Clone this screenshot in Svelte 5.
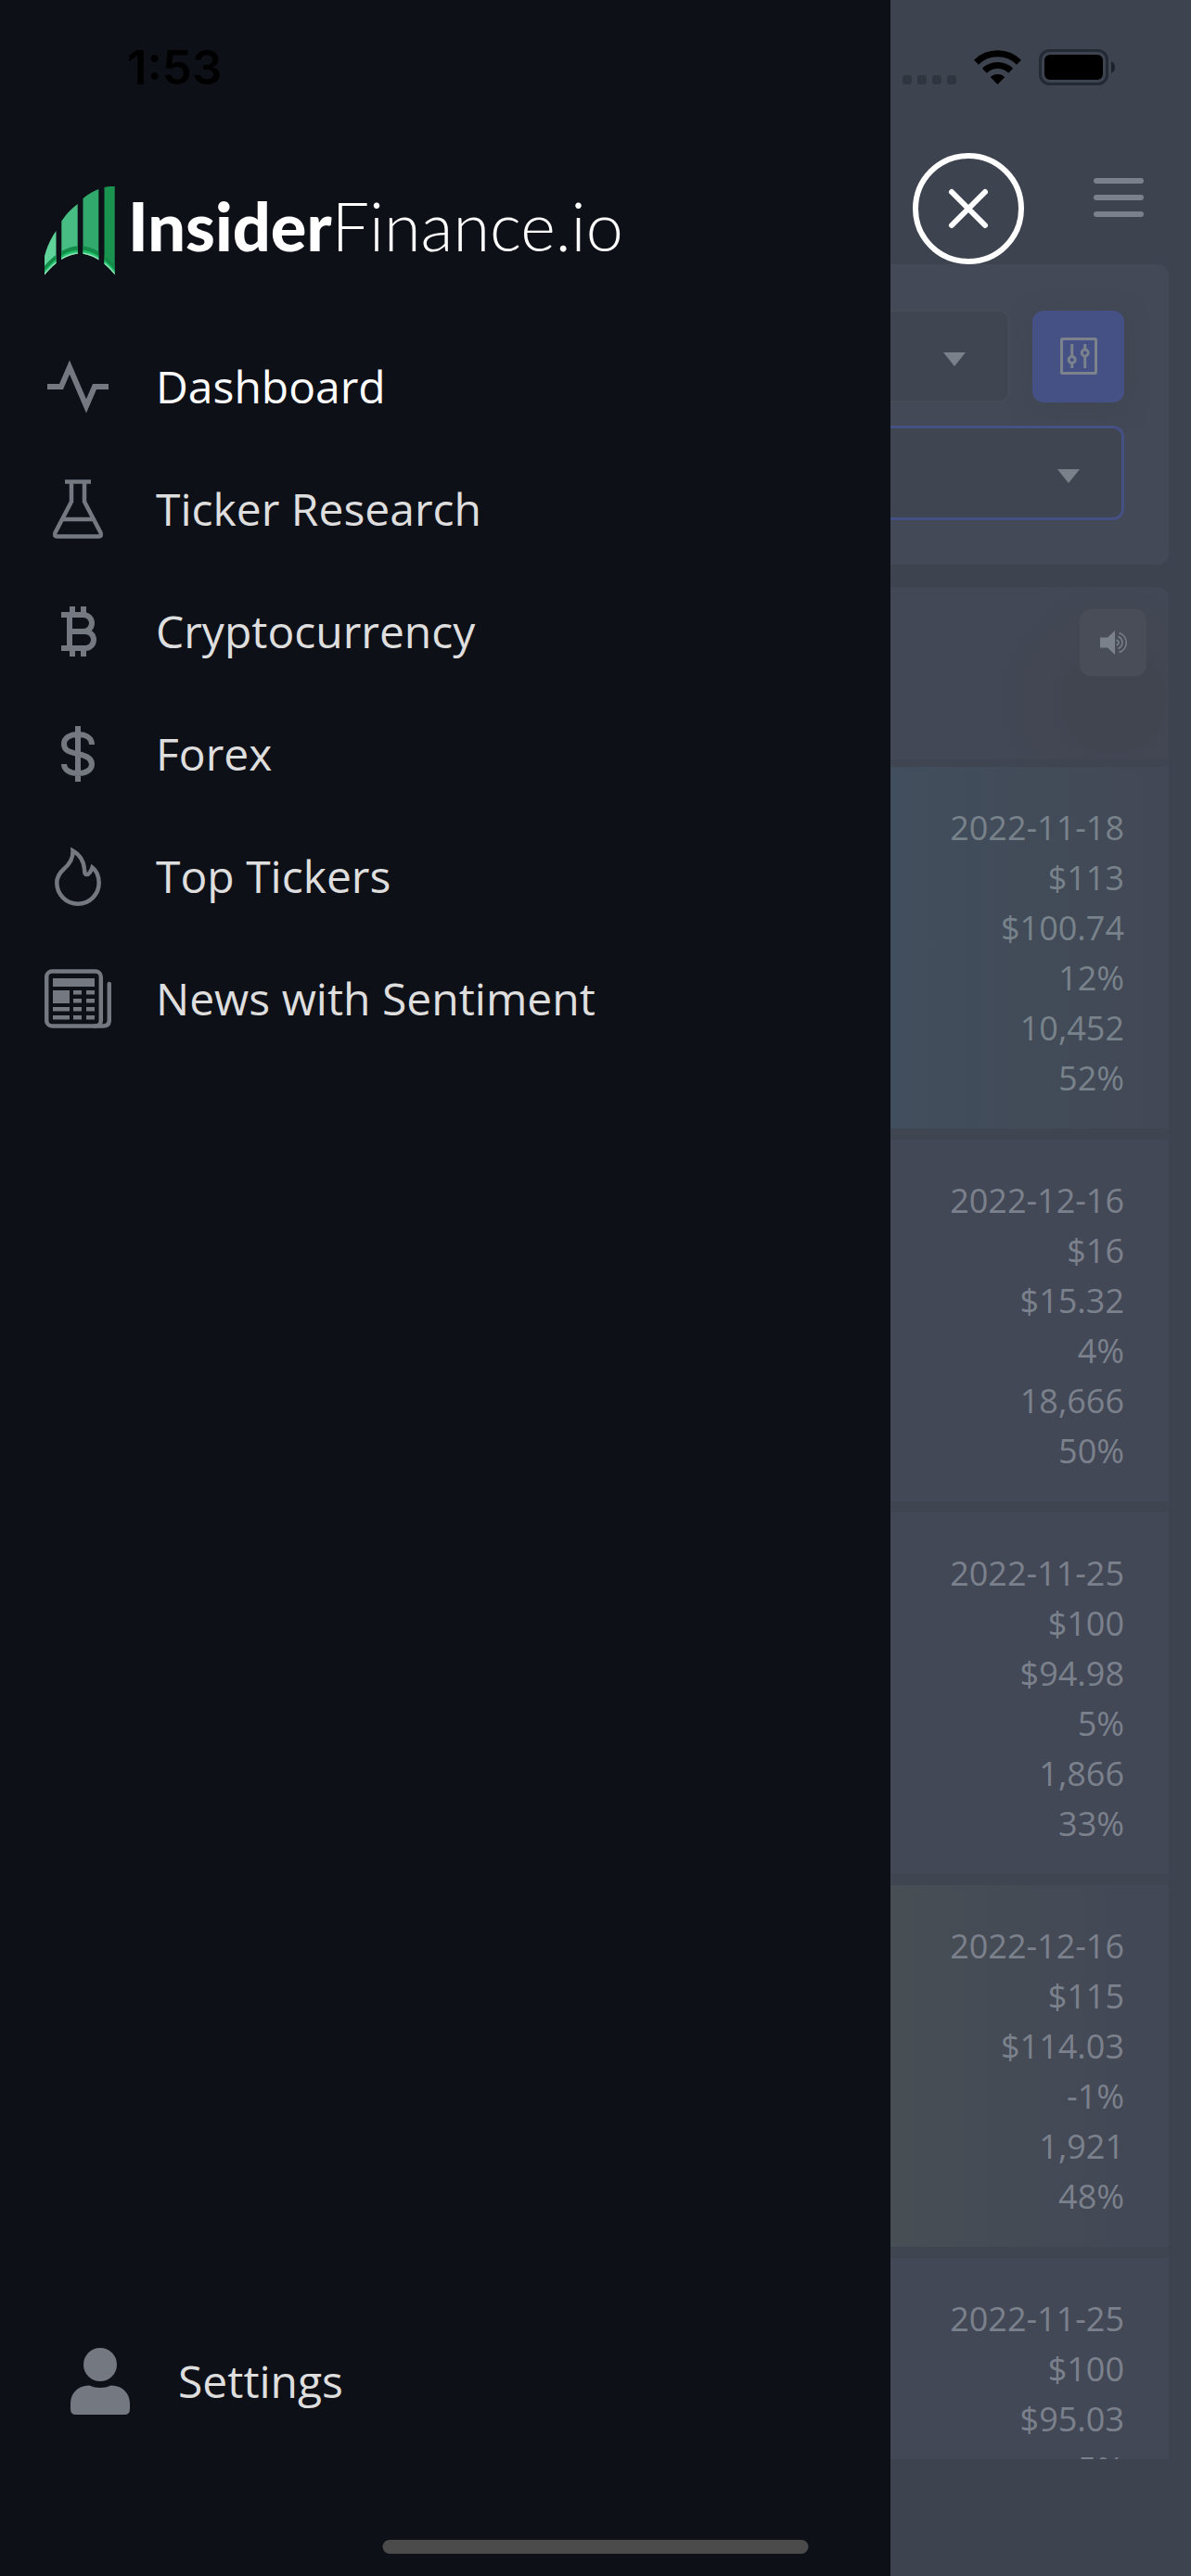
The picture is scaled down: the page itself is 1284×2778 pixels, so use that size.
<script>
  const menu = [
    { label: 'Dashboard', icon: 'pulse', active: true },
    { label: 'Ticker Research', icon: 'flask' },
    { label: 'Cryptocurrency', icon: 'bitcoin' },
    { label: 'Forex', icon: 'dollar' },
    { label: 'Top Tickers', icon: 'flame' },
    { label: 'News with Sentiment', icon: 'news' }
  ];
  const rows = [
    { tone: 'bull', values: ['2022-11-18', '$113', '$100.74', '12%', '10,452', '52%'] },
    { tone: 'plain', values: ['2022-12-16', '$16', '$15.32', '4%', '18,666', '50%'] },
    { tone: 'plain', values: ['2022-11-25', '$100', '$94.98', '5%', '1,866', '33%'] },
    { tone: 'gold', values: ['2022-12-16', '$115', '$114.03', '-1%', '1,921', '48%'] },
    { tone: 'plain', values: ['2022-11-25', '$100', '$95.03', '5%'] }
  ];
</script>

<div class="screen">
  <aside class="drawer">
    <a class="brand" href="#home">
      <svg width="76" height="96" viewBox="0 0 76 96" aria-hidden="true">
        <defs>
          <clipPath id="bars">
            <path d="M0 96V75Q4 60 12.5 48V96ZM18.3 96V37.5Q25 27 35.7 19V96ZM41.5 96V13Q49 6.500 58.300 3V96ZM64.500 96V1L70 0H75.700V96Z" />
          </clipPath>
          <clipPath id="arch"><path d="M0 0H76V95.500Q38 50 0 95.500Z" /></clipPath>
        </defs>
        <g clip-path="url(#arch)">
          <g clip-path="url(#bars)">
            <path fill="#5fd39a" d="M0 0H15V96H0Z" />
            <path fill="#48bd83" d="M15 0H38V96H15Z" />
            <path fill="#31a86c" d="M38 0H61V96H38Z" />
            <path fill="#1a9350" d="M61 0H76V96H61Z" />
            <g fill="none">
              <path stroke="#128c48" stroke-width="5" d="M0 89.500Q38 44 76 89.500" />
              <path stroke="#1fbf68" stroke-width="3" d="M0 93Q38 47.500 76 93" />
              <path stroke="#8fe0b5" stroke-width="3" d="M0 95.500Q38 50 76 95.500" />
            </g>
          </g>
        </g>
      </svg>
      <span class="wordmark"><b>Insider</b>Finance.io</span>
    </a>

    <nav>
      {#each menu as item}
        <a class="item" class:active={item.active} href="#{item.icon}">
          <svg class="glyph" width="72" height="66" viewBox="0 0 72 66" aria-hidden="true">
            {#if item.icon === 'pulse'}
              <path stroke-width="6" d="M3 33H18L27 12L45 54L54 33H69" />
            {:else if item.icon === 'flask'}
              <path stroke-width="4.500" d="M22 3.500H50M29 4V25L11.500 58.500Q10 62.500 13.500 62.500H58.500Q62 62.500 60.500 58.500L43 25V4M19 44H53" />
            {:else if item.icon === 'bitcoin'}
              <path stroke-width="6" d="M18 15H42a9 9 0 0 1 0 18H27M42 33H44a9 9 0 0 1 0 18H18M27 15V51M30 6V15M42 6V15M30 51V60M42 51V60" />
            {:else if item.icon === 'dollar'}
              <path stroke-width="6" d="M36 3V63M51 23C51 16 45 12 36 12C27 12 21 16 21 22.500C21 29 26 31 36 33C46 35 51 38 51 44C51 50 45 54 36 54C27 54 21 50 21 44" />
            {:else if item.icon === 'flame'}
              <path stroke-width="4.500" d="M30.500 5.500C31 14 27 20 20.500 25.500C15.500 30 13.300 35 13.300 40a22.700 22.700 0 0 0 45.400 0C58.700 33 56 27 51.500 23.500C50.500 27 48 31 45.500 31C42.500 31 43.500 28 43 25C42 16 37 9 30.500 5.500Z" />
            {:else}
              <rect stroke-width="4.500" x="2.200" y="3.500" width="58.600" height="59" rx="6" />
              <path stroke-width="4.500" stroke-linecap="round" d="M69.800 17V56Q69.800 62.500 63 62.500H54" />
              <path class="solid" d="M9 11H54V20H9ZM9 24H27V38H9ZM31 24H40V28.500H31ZM45 24H54V28.500H45ZM31 33H40V37.500H31ZM45 33H54V37.500H45ZM9 42H27V46.500H9ZM31 42H40V46.500H31ZM45 42H54V46.500H45ZM9 51H27V55.500H9ZM31 51H40V55.500H31ZM45 51H54V55.500H45Z" />
            {/if}
          </svg>
          <span>{item.label}</span>
        </a>
      {/each}
    </nav>

    <a class="item settings" href="#settings">
      <svg class="glyph" width="72" height="72" viewBox="0 0 72 72" aria-hidden="true">
        <circle class="solid" cx="36" cy="18" r="18" />
        <path class="solid" d="M24 40.500Q30 43 36 43Q42 43 48 40.500C60 40.500 68 49 68 60V66Q68 72 62 72H10Q4 72 4 66V60C4 49 12 40.500 24 40.500Z" />
      </svg>
      <span>Settings</span>
    </a>
  </aside>

  <main>
    <header>
      <button class="close" aria-label="Close menu">
        <svg width="48" height="48" viewBox="0 0 48 48" aria-hidden="true"><path d="M6 6L42 42M42 6L6 42" /></svg>
      </button>
      <button class="burger" aria-label="Open menu"><i></i><i></i><i></i></button>
    </header>

    <section class="filters">
      <div class="line">
        <div class="pick">
          <select aria-label="Ticker"><option></option></select>
          <svg width="24" height="22" viewBox="0 0 24 22" aria-hidden="true"><path d="M0 7H24L12 22Z" /></svg>
        </div>
        <button class="tune" aria-label="Filters">
          <svg width="40" height="40" viewBox="0 0 40 40" aria-hidden="true">
            <rect x="1.500" y="1.500" width="37" height="37" rx="1" />
            <path d="M12.700 7V19.500M12.700 28V33M26.700 7V12M26.700 21V33" />
            <circle cx="12.700" cy="24" r="3.500" /><circle cx="26.700" cy="16.500" r="3.500" />
          </svg>
        </button>
      </div>
      <div class="pick focus">
        <select aria-label="Filter preset"><option></option></select>
        <svg width="24" height="22" viewBox="0 0 24 22" aria-hidden="true"><path d="M0 7H24L12 22Z" /></svg>
      </div>
    </section>

    <section class="feed">
      <div class="feed-head">
        <button class="sound" aria-label="Sound">
          <svg width="30" height="28" viewBox="0 0 30 28" aria-hidden="true">
            <path class="cone" d="M1 8.500H9L17 1V27L9 19.500H1Z" />
            <path d="M18.500 11.500a2.500 2.500 0 0 1 0 5M20.500 7.500a7 7 0 0 1 0 13M21.500 3.500a11 11 0 0 1 0 21" />
          </svg>
        </button>
      </div>
      {#each rows as row}
        <div class="row {row.tone}">
          {#each row.values as value}<p>{value}</p>{/each}
        </div>
      {/each}
    </section>
  </main>

  <div class="status">
    <time>1:53</time>
    <svg width="232" height="40" viewBox="0 0 232 40" aria-hidden="true">
      <g fill="#30363f">
        <rect x="3" y="28" width="10" height="10" rx="3" /><rect x="19" y="28" width="10" height="10" rx="3" />
        <rect x="35" y="28" width="10" height="10" rx="3" /><rect x="51" y="28" width="10" height="10" rx="3" />
      </g>
      <g fill="none" stroke="#000" stroke-width="7">
        <path d="M82.500 14.200A33 33 0 0 1 128.500 14.200" />
        <path d="M91.300 23.200A20.500 20.500 0 0 1 119.700 23.200" />
      </g>
      <path d="M105.500 38L97.800 30.200A11 11 0 0 1 113.200 30.200Z" />
      <rect x="151.500" y="1.500" width="72" height="36" rx="10" fill="none" stroke="#242a33" stroke-width="3" />
      <rect x="156" y="6" width="63" height="27" rx="6" />
      <path fill="#1d222a" d="M228 13Q232 15 232 19.500T228 26Z" />
    </svg>
  </div>
  <div class="home-bar"></div>
</div>

<style>
  :global(body) { margin: 0; background: #3e4350; }
  .screen {
    position: relative;
    display: flex;
    height: 100vh;
    overflow: hidden;
    font-family: 'Open Sans', 'Noto Sans', sans-serif;
  }
  button, select { margin: 0; padding: 0; border: 0; background: none; font: inherit; color: inherit; }
  svg { flex: none; display: block; }

  .drawer {
    flex: 1;
    box-sizing: border-box;
    display: flex;
    flex-direction: column;
    padding: 201px 0 168px;
    background: #0e1018;
  }
  .brand { display: flex; gap: 14px; padding: 0 48px; margin-bottom: 54px; color: #fff; text-decoration: none; white-space: nowrap; }
  .wordmark { font: 300 72px/84px Lato, sans-serif; }
  .wordmark b { font-weight: 900; }
  .item {
    display: flex;
    align-items: center;
    gap: 48px;
    height: 132px;
    padding: 0 48px;
    color: #dedede;
    font-size: 48px;
    line-height: 64px;
    text-decoration: none;
  }
  .item.active { color: #fff; }
  .settings { height: 84px; margin-top: auto; padding: 0 72px; }
  .glyph { fill: none; stroke: #747881; }
  .solid { fill: #747881; stroke: none; }

  main {
    width: 324px;
    box-sizing: border-box;
    display: flex;
    flex-direction: column;
    padding: 165px 24px 126px 0;
    color: #7b818c;
  }
  header { flex: none; display: flex; justify-content: space-between; align-items: flex-start; padding: 0 27px 0 24px; }
  .close {
    width: 120px;
    height: 120px;
    box-sizing: border-box;
    display: grid;
    place-items: center;
    border: 6px solid #fff;
    border-radius: 50%;
  }
  .close path { stroke: #fff; stroke-width: 6; stroke-linecap: round; }
  .burger { width: 54px; height: 96px; display: flex; flex-direction: column; justify-content: center; gap: 12px; }
  .burger i { width: 100%; height: 6px; border-radius: 3px; background: #7b818c; }

  .filters {
    flex: none;
    display: flex;
    flex-direction: column;
    gap: 24px;
    padding: 48px 48px 48px 0;
    border-radius: 0 12px 12px 0;
    background: #434956;
  }
  .line { display: flex; align-items: center; gap: 24px; }
  .pick {
    flex: 1;
    display: grid;
    align-items: center;
    justify-items: end;
    box-sizing: border-box;
    border: 3px solid #464b58;
    border-left: 0;
    border-radius: 0 12px 12px 0;
    background: #3f4551;
  }
  .pick.focus { border-color: #455184; }
  .pick select { grid-area: 1 / 1; width: 100%; height: 96px; appearance: none; outline: 0; }
  .pick svg { grid-area: 1 / 1; margin-right: 45px; fill: #7b818b; pointer-events: none; }
  .tune {
    width: 99px;
    height: 99px;
    display: grid;
    place-items: center;
    border-radius: 12px;
    background: #455184;
    box-shadow: 0 6px 24px rgba(62, 68, 78, 0.5);
  }
  .tune svg { fill: none; stroke: #7b828c; stroke-width: 3; }

  .feed {
    flex: 1;
    min-height: 0;
    overflow: hidden;
    margin-top: 24px;
    border-radius: 0 12px 0 0;
    background: #404552;
  }
  .feed-head {
    height: 186px;
    box-sizing: border-box;
    display: flex;
    justify-content: flex-end;
    padding: 24px;
    margin-bottom: 8px;
    background: radial-gradient(circle at 240px 122px, #414550 0 56px, #424652 58px, #434856 144px);
  }
  .sound { width: 72px; height: 72px; display: grid; place-items: center; border-radius: 12px; background: #484d58; }
  .sound svg { fill: none; stroke: #7b818b; stroke-width: 1.5; }
  .sound .cone { fill: #7b818b; stroke: none; }
  .row { margin-bottom: 12px; padding: 39px 48px 27px 0; background: #434856; }
  .row.bull { color: #78828a; background: linear-gradient(90deg, #414e5d, #424b58 55%, #434856); }
  .row.gold { background: linear-gradient(90deg, #474e54, #434856 88%); }
  .row p { margin: 0; font-size: 36px; line-height: 54px; text-align: right; }

  .status {
    position: absolute;
    inset: 0 0 auto;
    display: flex;
    justify-content: space-between;
    align-items: center;
    padding: 43px 82px 43px 137px;
    pointer-events: none;
  }
  .status time { font: 600 51px/60px Inter, sans-serif; color: #000; }
  .home-bar {
    position: absolute;
    bottom: 24px;
    left: 50%;
    width: 459px;
    height: 15px;
    transform: translateX(-50%);
    border-radius: 8px;
    background: #4b4b4b;
  }
</style>
